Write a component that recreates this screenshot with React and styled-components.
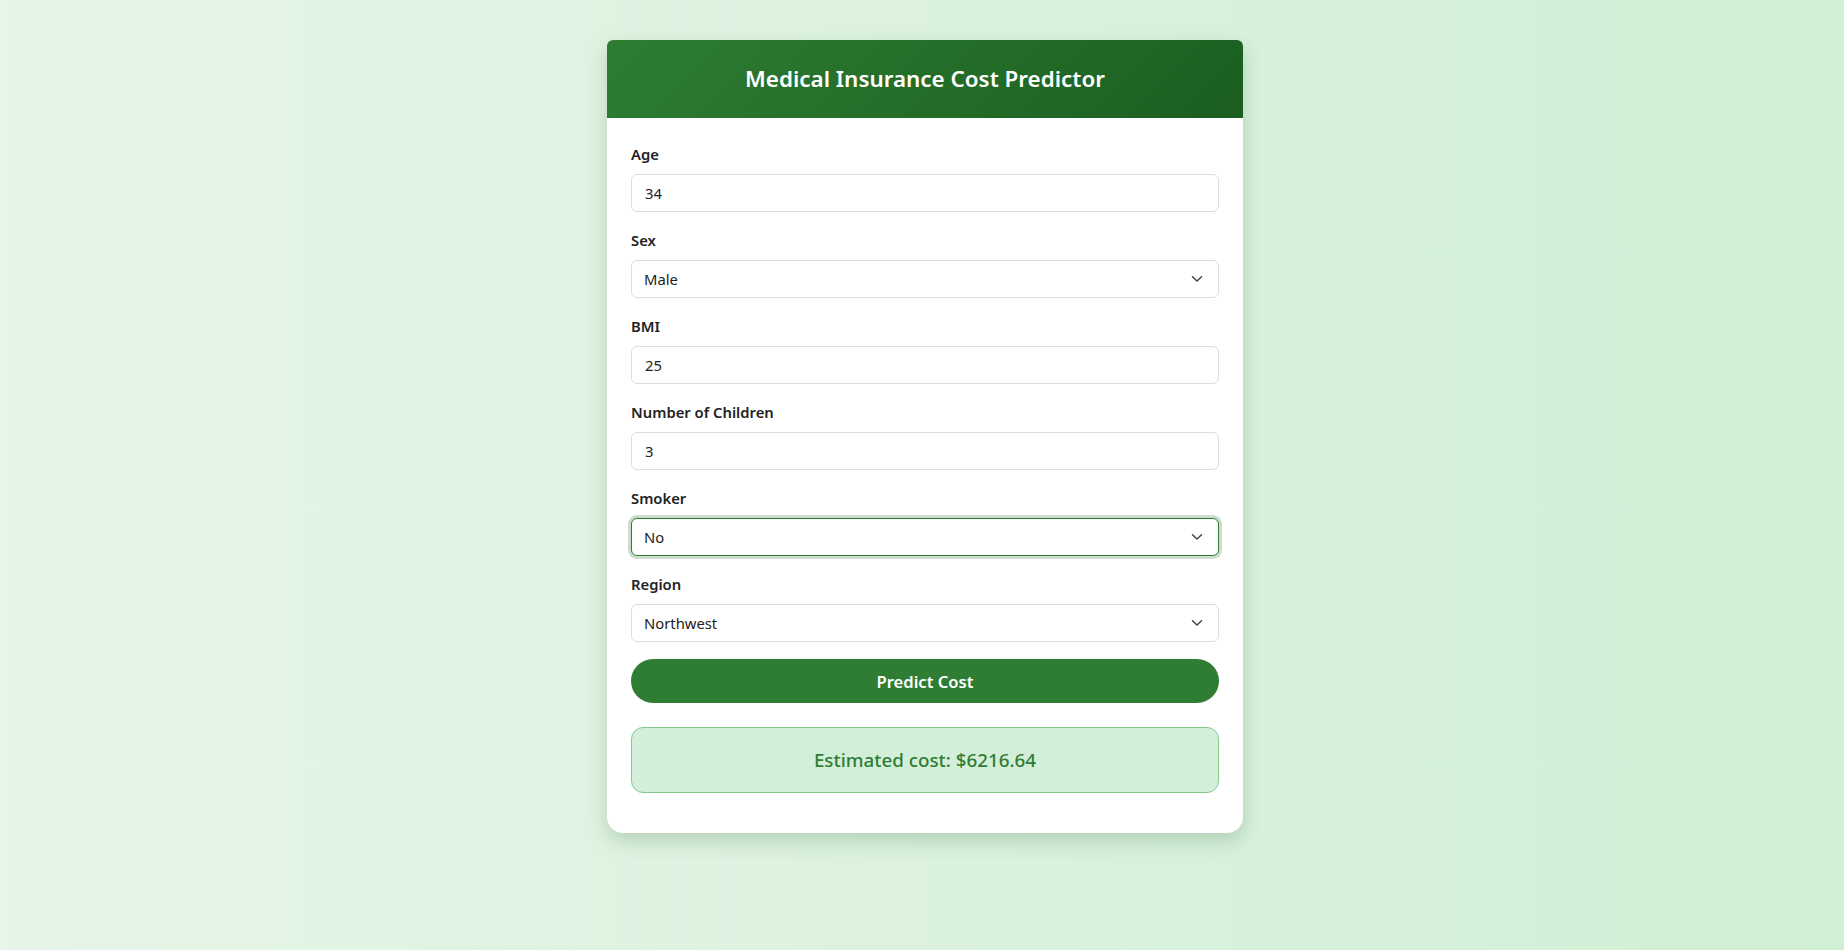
import styled, { createGlobalStyle } from "styled-components";
import { useState } from "react";

const GlobalStyle = createGlobalStyle`
  * {
    box-sizing: border-box;
  }
  html, body {
    margin: 0;
    min-height: 100%;
  }
  body {
    font-family: "Noto Sans", "Open Sans", sans-serif;
    background: linear-gradient(to right, #e6f5e8, #d1efd5);
    min-height: 950px;
  }
`

const Page = styled('div')`
  display: flex;
  justify-content: center;
  padding: 40px 0 0 6px;
`

const Card = styled('div')`
  width: 636px;
  background-color: #fff;
  border-radius: 6px 6px 16px 16px;
  box-shadow: 0 8px 20px rgba(40, 90, 50, 0.22);
`

const Header = styled('div')`
  background: linear-gradient(135deg, #2e7d32, #1b5e20);
  border-radius: 6px 6px 0 0;
  padding: 24px;
  text-align: center;
`

const Title = styled('h1')`
  margin: 0;
  color: #fff;
  font-size: 22.4px;
  line-height: 30px;
  font-weight: 600;
`

const Body = styled('div')`
  padding: 24px 24px 40px;
`

const Field = styled('div')`
  margin-bottom: 16px;
`

const Label = styled('label')`
  display: block;
  font-size: 14.8px;
  line-height: 24px;
  font-weight: 600;
  color: #222;
  margin-bottom: 8px;
`

const Input = styled('input')`
  display: block;
  width: 100%;
  height: 38px;
  padding: 0 13px;
  border: 1px solid #dcdde0;
  border-radius: 6px;
  font-family: inherit;
  font-size: 14.8px;
  color: #222;
  background: #fff;
  outline: none;
`

const SelectWrap = styled('div')`
  position: relative;
`

const Select = styled('select')`
  display: block;
  width: 100%;
  height: 38px;
  padding: 0 36px 0 12px;
  appearance: none;
  border: 1px solid ${p => p.$focused ? '#2e7d32' : '#dcdde0'};
  border-radius: 6px;
  box-shadow: ${p => p.$focused ? '0 0 0 3px rgba(46, 125, 50, 0.25)' : 'none'};
  font-family: inherit;
  font-size: 14.8px;
  color: #222;
  background: #fff;
  outline: none;
`

const Chevron = styled('svg')`
  position: absolute;
  right: 16px;
  top: 50%;
  transform: translateY(-50%);
  pointer-events: none;
`

const Button = styled('button')`
  display: block;
  width: 100%;
  height: 44px;
  margin-top: 17px;
  border: none;
  border-radius: 999px;
  background-color: #2e7d32;
  color: #fff;
  font-family: inherit;
  font-size: 16.6px;
  font-weight: 600;
  cursor: pointer;
`

const Result = styled('div')`
  margin-top: 24px;
  height: 66px;
  display: flex;
  align-items: center;
  justify-content: center;
  background-color: #d3efd9;
  border: 1px solid #86c98b;
  border-radius: 12px;
  color: #2e7d32;
  font-size: 18.8px;
  font-weight: 500;
`

const ChevronIcon = () => (
  <Chevron width="12" height="8" viewBox="0 0 12 8" fill="none">
    <path d="M1.5 1.75 L6 6 L10.5 1.75" stroke="#444" strokeWidth="1.5" strokeLinecap="round" strokeLinejoin="round"/>
  </Chevron>
)

const SelectField = ({label, value, options, focused}) => (
  <Field>
    <Label>{label}</Label>
    <SelectWrap>
      <Select defaultValue={value} $focused={focused}>
        {options.map(o => <option key={o}>{o}</option>)}
      </Select>
      <ChevronIcon/>
    </SelectWrap>
  </Field>
)

const InputField = ({label, value}) => (
  <Field>
    <Label>{label}</Label>
    <Input type="number" defaultValue={value}/>
  </Field>
)

export default function App() {
  const [cost] = useState(6216.64)

  return (
    <>
      <GlobalStyle/>
      <Page>
        <Card>
          <Header>
            <Title>Medical Insurance Cost Predictor</Title>
          </Header>
          <Body>
            <InputField label="Age" value="34"/>
            <SelectField label="Sex" value="Male" options={['Male', 'Female']}/>
            <InputField label="BMI" value="25"/>
            <InputField label="Number of Children" value="3"/>
            <SelectField label="Smoker" value="No" options={['No', 'Yes']} focused/>
            <SelectField label="Region" value="Northwest" options={['Northeast', 'Northwest', 'Southeast', 'Southwest']}/>
            <Button>Predict Cost</Button>
            <Result>Estimated cost: ${cost.toFixed(2)}</Result>
          </Body>
        </Card>
      </Page>
    </>
  )
}
